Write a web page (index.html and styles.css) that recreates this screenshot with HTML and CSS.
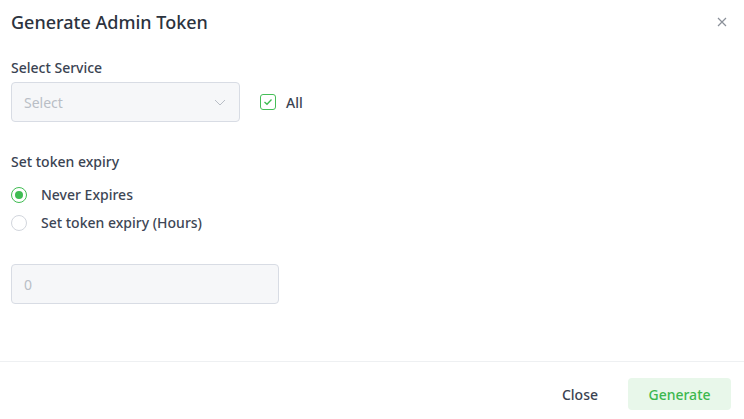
FILE: index.html
```html
<!DOCTYPE html>
<html>
<head>
<meta charset="utf-8">
<link rel="stylesheet" href="styles.css">
</head>
<body>
<div class="modal">
  <div class="header">
    <h2 class="title">Generate Admin Token</h2>
    <button class="close-x" aria-label="Close">
      <svg width="10" height="10" viewBox="0 0 10 10"><path d="M1 1L9 9M9 1L1 9" stroke="#8a9099" stroke-width="1.2" fill="none"/></svg>
    </button>
  </div>
  <div class="body">
    <div class="label">Select Service</div>
    <div class="service-row">
      <div class="select">
        <span class="placeholder">Select</span>
        <svg class="chevron" width="12" height="7" viewBox="0 0 12 7"><path d="M1 1L6 6L11 1" stroke="#b9bec6" stroke-width="1" fill="none"/></svg>
      </div>
      <label class="check">
        <span class="box"><svg width="10" height="8" viewBox="0 0 10 8"><path d="M1.5 4L4 6.3L8.5 1.5" stroke="#3fbc52" stroke-width="1.3" fill="none"/></svg></span>
        <span class="check-text">All</span>
      </label>
    </div>
    <div class="label expiry-label">Set token expiry</div>
    <div class="radios">
      <label class="radio"><span class="dot on"></span><span>Never Expires</span></label>
      <label class="radio"><span class="dot"></span><span>Set token expiry (Hours)</span></label>
    </div>
    <div class="hours">0</div>
  </div>
  <div class="footer">
    <button class="btn btn-close">Close</button>
    <button class="btn btn-generate">Generate</button>
  </div>
</div>
</body>
</html>
```
FILE: styles.css
```css
* { box-sizing: border-box; }
html, body { margin: 0; padding: 0; background: #fff; }
body { font-family: "Noto Sans", "Open Sans", sans-serif; color: #3a4250; }
.modal { width: 744px; height: 419px; display: flex; flex-direction: column; }
.header { display: flex; justify-content: space-between; align-items: flex-start; padding: 8px 16px 0 11px; }
.title { margin: 0; font-size: 18px; font-weight: 500; line-height: 28px; color: #2c333e; }
.close-x { border: 0; background: none; padding: 0; margin-top: 8px; width: 12px; height: 12px; display: flex; align-items: center; justify-content: center; }
.body { padding: 0 11px; flex: 1; }
.label { font-size: 14px; font-weight: 500; color: #3a4352; line-height: 20px; margin-top: 22px; }
.service-row { display: flex; align-items: center; margin-top: 4px; }
.select { width: 229px; height: 40px; border: 1px solid #d8dce4; border-radius: 4px; background: #f6f7f9; display: flex; align-items: center; justify-content: space-between; padding: 0 13px 0 12px; }
.placeholder { font-size: 14px; color: #b9bec6; }
.check { display: flex; align-items: center; margin-left: 20px; gap: 10px; }
.box { width: 16px; height: 16px; border: 1.5px solid #45be57; border-radius: 3px; display: flex; align-items: center; justify-content: center; }
.check-text { font-size: 14px; font-weight: 500; color: #3a4352; }
.expiry-label { margin-top: 30px; }
.radios { display: flex; flex-direction: column; gap: 8px; margin-top: 13px; }
.radio { display: flex; align-items: center; gap: 14px; font-size: 14px; font-weight: 500; color: #3d4655; line-height: 20px; }
.dot { width: 16px; height: 16px; border-radius: 50%; border: 1px solid #d2d6dd; background: #fff; display: inline-block; position: relative; }
.dot.on { border: 1.5px solid #3fbc52; }
.dot.on::after { content: ""; position: absolute; left: 50%; top: 50%; width: 8px; height: 8px; margin: -4px 0 0 -4px; border-radius: 50%; background: #3fbc52; }
.hours { width: 268px; height: 40px; margin-top: 31px; border: 1px solid #d8dce4; border-radius: 4px; background: #f6f7f9; font-size: 14px; color: #b9bec6; padding: 0 12px; display: flex; align-items: center; }
.footer { border-top: 1px solid #eef0f2; height: 58px; display: flex; justify-content: flex-end; align-items: flex-start; padding: 16px 13px 0 0; gap: 14px; }
.btn { font-family: inherit; font-size: 14px; font-weight: 500; border: 0; border-radius: 4px; height: 32px; cursor: pointer; }
.btn-close { background: none; color: #3a4250; padding: 0 16px; }
.btn-generate { background: #e8f7ea; color: #3cb84e; width: 103px; }
```
